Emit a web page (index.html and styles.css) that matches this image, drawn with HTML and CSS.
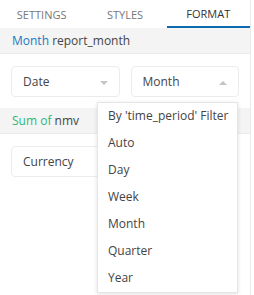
FILE: index.html
```html
<!DOCTYPE html>
<html lang="en">
<head>
    <meta charset="utf-8">
    <title>Format panel</title>
    <link rel="stylesheet" href="styles.css">
</head>
<body>
    <div class="panel">
        <div class="tabs">
            <div class="tab">SETTINGS</div>
            <div class="tab">STYLES</div>
            <div class="tab active">FORMAT</div>
        </div>

        <div class="section-head"><span class="blue-text">Month</span> report_month</div>
        <div class="section-body">
            <div class="select">
                <span>Date</span>
                <span class="caret down"></span>
            </div>
            <div class="select open">
                <span>Month</span>
                <span class="caret up"></span>
                <div class="menu">
                    <div class="menu-item">By 'time_period' Filter</div>
                    <div class="menu-item">Auto</div>
                    <div class="menu-item">Day</div>
                    <div class="menu-item">Week</div>
                    <div class="menu-item">Month</div>
                    <div class="menu-item">Quarter</div>
                    <div class="menu-item">Year</div>
                </div>
            </div>
        </div>

        <div class="section-head"><span class="green-text">Sum of</span> nmv</div>
        <div class="section-body">
            <div class="select">
                <span>Currency</span>
            </div>
            <div class="select-spacer"></div>
        </div>
    </div>
</body>
</html>
```

FILE: styles.css
```css
body {
    margin: 0;
    background-color: #fff;
    font-family: 'Open Sans', 'Noto Sans', sans-serif;
    color: #444;
    overflow: hidden;
}

.panel {
    width: 250px;
    height: 295px;
    border-right: 1px solid #e9e9e9;
}

.tabs {
    display: flex;
    height: 28px;
}

.tab {
    flex: 1;
    display: flex;
    align-items: center;
    justify-content: center;
    font-size: 11px;
    color: #777;
    box-sizing: border-box;
    padding-top: 1px;
}
.tab.active {
    color: #333;
    border-bottom: 2px solid #0d6aad;
}

.section-head {
    height: 25px;
    line-height: 25px;
    padding-left: 12px;
    font-size: 12px;
    color: #444;
    background: #f4f4f4;
    border-bottom: 1px solid #ebebeb;
}
.blue-text {
    color: #1b78c2;
}
.green-text {
    color: #2cb87a;
}

.section-body {
    display: flex;
    gap: 11px;
    padding: 12px 11px 11px 11px;
}

.select {
    position: relative;
    flex: 1;
    height: 31px;
    box-sizing: border-box;
    border: 1px solid #ececec;
    border-radius: 4px;
    display: flex;
    align-items: center;
    justify-content: space-between;
    padding: 0 11px 0 11px;
    font-size: 12px;
    color: #444;
}
.select-spacer {
    flex: 1;
}

.caret {
    width: 0;
    height: 0;
    border-left: 4px solid transparent;
    border-right: 4px solid transparent;
    margin-top: 3px;
}
.caret.down {
    border-top: 4px solid #c4c4c4;
}
.caret.up {
    border-bottom: 4px solid #c4c4c4;
    margin-top: 2px;
}

.menu {
    position: absolute;
    top: 35px;
    right: 0;
    width: 139px;
    background: #fff;
    border: 1px solid #e6e6e6;
    box-shadow: 0 1px 4px rgba(0, 0, 0, 0.12);
    z-index: 10;
}

.menu-item {
    height: 27px;
    line-height: 26px;
    padding-left: 10px;
    font-size: 12px;
    color: #444;
    white-space: nowrap;
}
```
